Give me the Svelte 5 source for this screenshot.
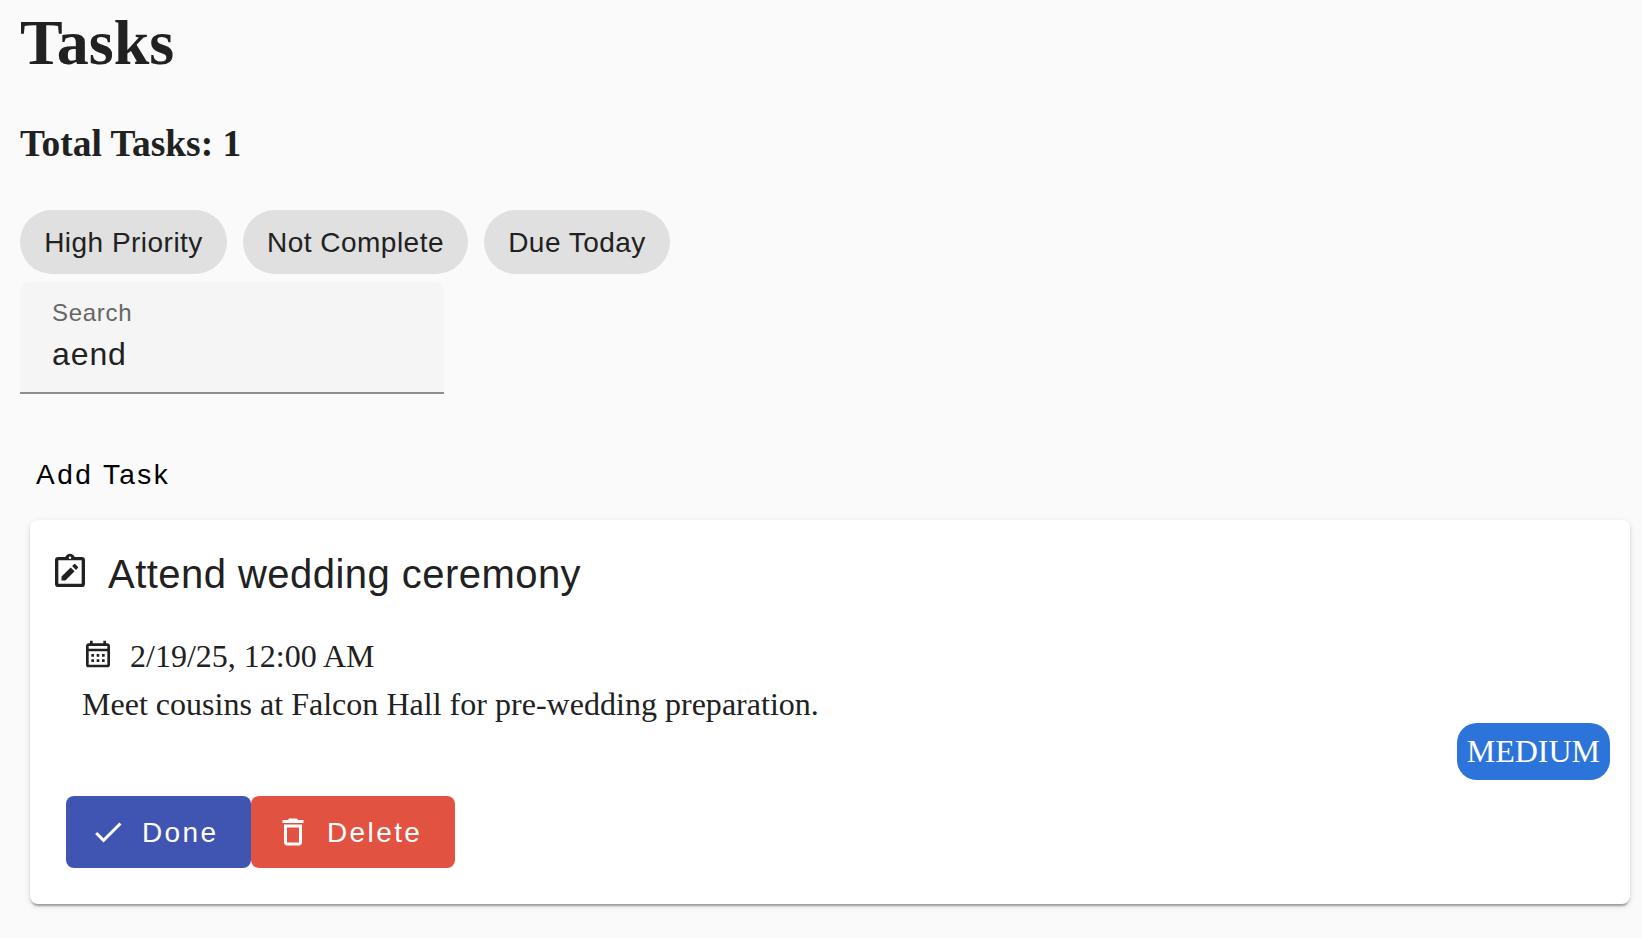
<script>
  let search = $state('aend');
  const filters = [
    { label: 'High Priority', width: 207 },
    { label: 'Not Complete', width: 225 },
    { label: 'Due Today', width: 186 }
  ];
  const tasks = [
    {
      title: 'Attend wedding ceremony',
      due: '2/19/25, 12:00 AM',
      description: 'Meet cousins at Falcon Hall for pre-wedding preparation.',
      priority: 'MEDIUM'
    }
  ];
</script>

<main>
  <h1>Tasks</h1>
  <h3>Total Tasks: {tasks.length}</h3>

  <div class="chips">
    {#each filters as filter}
      <button class="chip" style="width: {filter.width}px">{filter.label}</button>
    {/each}
  </div>

  <label class="field">
    <span>Search</span>
    <input bind:value={search} />
  </label>

  <button class="add">Add Task</button>

  {#each tasks as task}
    <article class="card">
      <header>
        <svg width="40" height="40" viewBox="0 0 24 24">
          <path fill-rule="evenodd" d="M19 3h-4.18C14.4 1.84 13.3 1 12 1s-2.4.84-2.82 2H5a2 2 0 0 0-2 2v14a2 2 0 0 0 2 2h14a2 2 0 0 0 2-2V5a2 2 0 0 0-2-2zM12 2.75a.75.75 0 1 1 0 1.5.75.75 0 0 1 0-1.5zM5 5h14v14H5z" />
          <path d="M6.9 14.75V17.1h2.35l5.5-5.5-2.35-2.35zM16.7 9.65c.25-.25.25-.6 0-.85l-1.45-1.45c-.25-.25-.6-.25-.85 0l-1.15 1.1 2.35 2.35z" />
        </svg>
        <h2>{task.title}</h2>
      </header>
      <div class="content">
        <div class="due">
          <svg width="32" height="32" viewBox="0 0 24 24">
            <path d="M19 4h-1V2h-2v2H8V2H6v2H5c-1.11 0-1.99.9-1.99 2L3 20a2 2 0 0 0 2 2h14c1.1 0 2-.9 2-2V6c0-1.1-.9-2-2-2zm0 16H5V10h14v10zm0-12H5V6h14v2zM9 14H7v-2h2v2zm4 0h-2v-2h2v2zm4 0h-2v-2h2v2zm-8 4H7v-2h2v2zm4 0h-2v-2h2v2zm4 0h-2v-2h2v2z" />
          </svg>
          <span>{task.due}</span>
        </div>
        <p>{task.description}</p>
      </div>
      <div class="priority"><span>{task.priority}</span></div>
      <div class="actions">
        <button class="done">
          <svg width="36" height="36" viewBox="0 0 24 24">
            <path d="M9 16.17 4.83 12l-1.42 1.41L9 19 21 7l-1.41-1.41z" />
          </svg>
          <span>Done</span>
        </button>
        <button class="delete">
          <svg width="36" height="36" viewBox="0 0 24 24">
            <path d="M16 9v10H8V9h8m-1.5-6h-5l-1 1H5v2h14V4h-3.5l-1-1zM18 7H6v12c0 1.1.9 2 2 2h8c1.1 0 2-.9 2-2V7z" />
          </svg>
          <span>Delete</span>
        </button>
      </div>
    </article>
  {/each}
</main>

<style>
  :global(body) {
    margin: 0;
    background: #fafafa;
    color: #212121;
  }

  main {
    box-sizing: border-box;
    height: 938px;
    padding: 6px 12px 0 20px;
    overflow: hidden;
    font-family: "Liberation Serif", serif;
    font-size: 32px;
  }

  h1, h2, h3, p {
    margin: 0;
  }

  h1 {
    font-size: 64px;
    line-height: 74px;
  }

  h3 {
    margin-top: 43px;
    font-size: 37.44px;
    line-height: 42px;
  }

  button, input, .field, h2 {
    font-family: "Liberation Sans", Arial, sans-serif;
    font-weight: 400;
  }

  button {
    border: 0;
    padding: 0;
    font-size: 28px;
    white-space: nowrap;
  }

  svg {
    display: block;
    flex: none;
    fill: currentColor;
  }

  .chips {
    display: flex;
    gap: 16px;
    margin-top: 45px;
  }

  .chip {
    height: 64px;
    padding-top: 2px;
    border-radius: 32px;
    background: #e0e0e0;
    color: #212121;
    letter-spacing: 0.48px;
  }

  .field {
    display: flex;
    flex-direction: column;
    box-sizing: border-box;
    width: 424px;
    height: 112px;
    margin-top: 8px;
    padding: 16px 32px 0;
    border-bottom: 2px solid #8e8e8e;
    border-radius: 8px 8px 0 0;
    background: #f5f5f5;
  }

  .field span {
    color: #666;
    font-size: 24px;
    line-height: 30px;
    letter-spacing: 0.7px;
  }

  .field input {
    width: 100%;
    height: 36px;
    margin-top: 8px;
    padding: 0;
    border: 0;
    outline: 0;
    background: none;
    color: #212121;
    font-size: 32px;
    letter-spacing: 0.9px;
  }

  .add {
    display: block;
    height: 72px;
    margin-top: 44px;
    padding: 2px 16px 0;
    background: none;
    color: #000;
    letter-spacing: 2.45px;
  }

  .card {
    box-sizing: border-box;
    height: 384px;
    margin: 10px 0 0 10px;
    padding: 22px 20px 0;
    border-radius: 8px;
    background: #fff;
    box-shadow:
      0 4px 2px -2px rgba(0, 0, 0, 0.2),
      0 2px 2px 0 rgba(0, 0, 0, 0.14),
      0 2px 6px 0 rgba(0, 0, 0, 0.12);
  }

  header {
    display: flex;
    align-items: flex-start;
    gap: 18px;
  }

  header svg {
    margin-top: 10px;
  }

  h2 {
    font-size: 40px;
    line-height: 64px;
    letter-spacing: 0.46px;
  }

  .content {
    padding: 26px 32px 0;
  }

  .due {
    display: flex;
    gap: 16px;
    height: 48px;
    line-height: 48px;
  }

  .due svg {
    margin-top: 6px;
  }

  p {
    margin-top: 5px;
    line-height: 38px;
    letter-spacing: 0.02px;
  }

  .priority {
    display: flex;
    justify-content: flex-end;
  }

  .priority span {
    padding: 10px;
    border-radius: 20px;
    background: #2d74da;
    color: #fff;
    line-height: 37px;
  }

  .actions {
    display: flex;
    padding: 16px 16px 0;
  }

  .actions button {
    display: flex;
    align-items: center;
    gap: 16px;
    box-sizing: border-box;
    height: 72px;
    padding-left: 24px;
    border-radius: 8px;
    color: #fff;
    letter-spacing: 2.4px;
  }

  .actions button span {
    padding-top: 2px;
  }

  .done {
    width: 185px;
    background: #4054b2;
  }

  .delete {
    width: 204px;
    background: #e15241;
  }
</style>
